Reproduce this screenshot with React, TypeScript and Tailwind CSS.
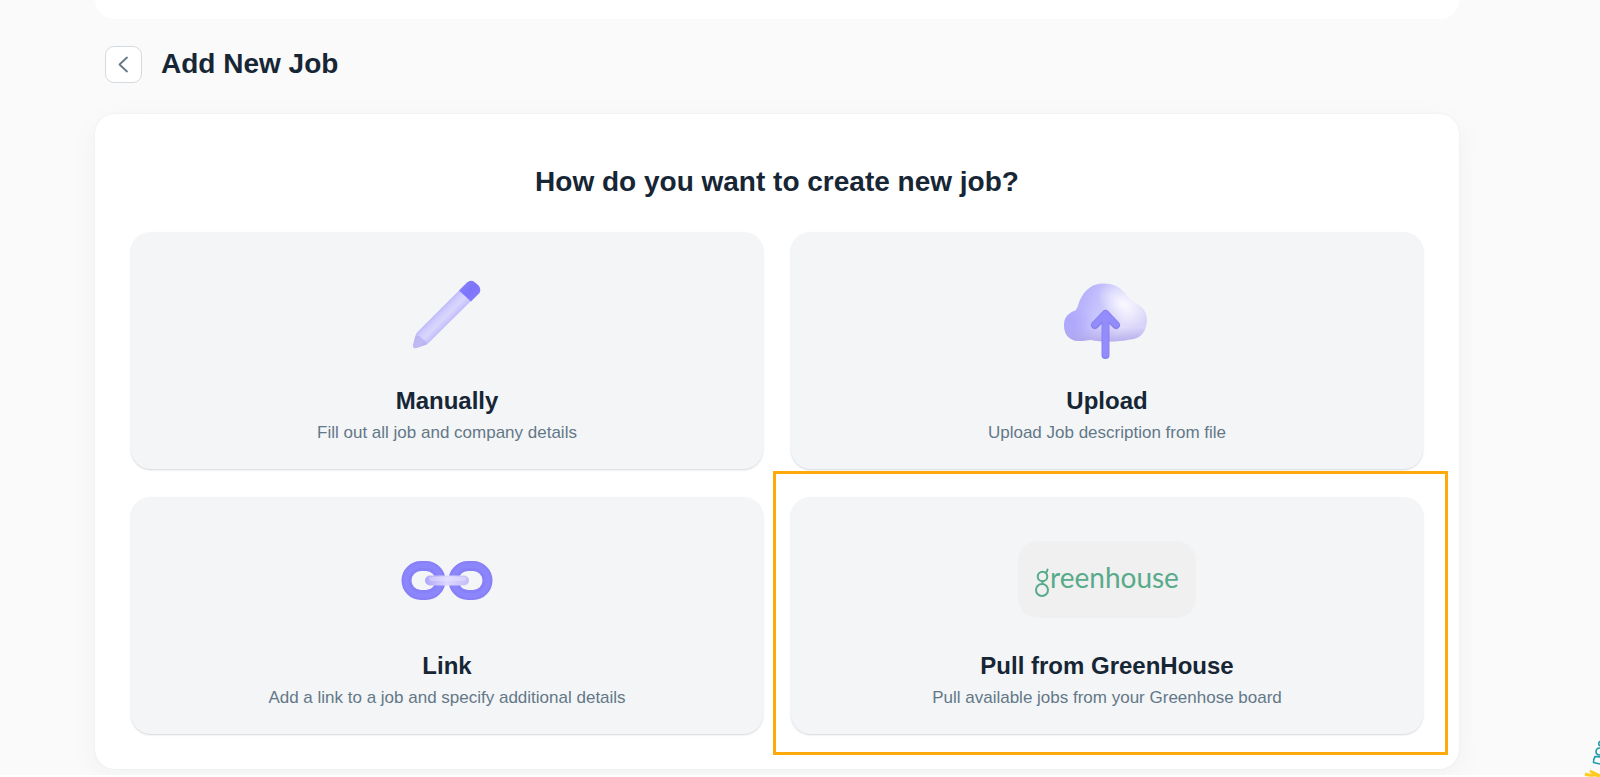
import React from "react"

interface JobOption {
  title: string;
  description: string;
  icon: React.ReactNode;
  highlighted?: boolean;
}

function PencilIcon() {
  return (
    <svg width="96" height="96" viewBox="0 0 96 96" aria-hidden="true">
      <defs>
        <linearGradient id="pencil-body" gradientUnits="userSpaceOnUse" x1="38" y1="42" x2="51" y2="55">
          <stop offset="0" stopColor="#bab2fa" />
          <stop offset="0.3" stopColor="#cfcbfd" />
          <stop offset="0.6" stopColor="#d9d6fd" />
          <stop offset="1" stopColor="#c0b8fb" />
        </linearGradient>
        <linearGradient id="pencil-cap" x1="0" y1="0" x2="1" y2="1">
          <stop offset="0" stopColor="#8a84f8" />
          <stop offset="0.5" stopColor="#7c75fb" />
          <stop offset="1" stopColor="#8a80f9" />
        </linearGradient>
      </defs>
      <path d="M60.500 22 72 33 29 75.500Q28 76.500 26.500 77L17.500 80Q13.500 81 14 77L16.500 67.500Q17 65.500 18 64.500Z" fill="url(#pencil-body)" />
      <path d="M16.500 68Q21 67 23 70.500 27 72 27.500 76.500L17.500 80Q13.500 81 14 77Z" fill="#aaa0ec" opacity="0.5" />
      <path d="M60 22.500 68 14.500Q71.500 11.500 75.500 14L79.500 17.500Q82.500 21 80.500 25L72 33.500Z" fill="url(#pencil-cap)" />
    </svg>
  )
}

function CloudUploadIcon() {
  return (
    <svg width="96" height="96" viewBox="0 0 96 96" aria-hidden="true">
      <defs>
        <linearGradient id="cloud-base" x1="0" y1="0.3" x2="1" y2="0.6">
          <stop offset="0" stopColor="#a9a2fb" />
          <stop offset="0.4" stopColor="#c7c3fd" />
          <stop offset="0.75" stopColor="#e2defb" />
          <stop offset="1" stopColor="#d8d3f8" />
        </linearGradient>
        <radialGradient id="cloud-shine" gradientUnits="userSpaceOnUse" cx="0" cy="0" r="20" gradientTransform="translate(64 36) rotate(35) scale(1.400 0.900)">
          <stop offset="0" stopColor="#fff" stopOpacity="0.85" />
          <stop offset="1" stopColor="#fff" stopOpacity="0" />
        </radialGradient>
        <radialGradient id="cloud-lobe" gradientUnits="userSpaceOnUse" cx="16" cy="58" r="20">
          <stop offset="0" stopColor="#9c95fb" stopOpacity="0.4" />
          <stop offset="1" stopColor="#9c95fb" stopOpacity="0" />
        </radialGradient>
        <linearGradient id="cloud-floor" x1="0" y1="0" x2="0" y2="1">
          <stop offset="0.75" stopColor="#a79ee6" stopOpacity="0" />
          <stop offset="1" stopColor="#a79ee6" stopOpacity="0.7" />
        </linearGradient>
        <path id="cloud-shape" d="M20 73C10 73 5 66 5 57.500 5 49 10 44.500 16.500 42.500 19 40 19 36 21 32 26 21 34 15.500 44 15.500 55 15.500 63 20 68 28 72 34 77 34.500 81 38 86 42 88 47 88 52 88 63 81 71.500 71 71.500 64 73 57 73.500 50 73.500 43 73.500 38 73.500 32 72 28 72.300 25 73 20 73Z" />
      </defs>
      <use href="#cloud-shape" fill="url(#cloud-base)" />
      <use href="#cloud-shape" fill="url(#cloud-lobe)" />
      <use href="#cloud-shape" fill="url(#cloud-shine)" />
      <use href="#cloud-shape" fill="url(#cloud-floor)" />
      <path d="M46.500 87V48M36 57 46.500 46 57 57" fill="none" stroke="#8780f0" strokeWidth="8" strokeLinecap="round" strokeLinejoin="round" />
      <path d="M46.500 86.500V48M36 56.500 46.500 46 57 56.500" fill="none" stroke="#938cfb" strokeWidth="6" strokeLinecap="round" strokeLinejoin="round" />
    </svg>
  )
}

function ChainIcon() {
  return (
    <svg width="96" height="96" viewBox="0 0 96 96" aria-hidden="true">
      <defs>
        <linearGradient id="chain-bar" x1="0" y1="0" x2="1" y2="0">
          <stop offset="0" stopColor="#b0a6fa" />
          <stop offset="0.5" stopColor="#dcd8fd" />
          <stop offset="1" stopColor="#c3bcfb" />
        </linearGradient>
      </defs>
      <g fill="none">
        <rect x="7.500" y="33" width="34" height="29" rx="14.500" stroke="#8780f7" strokeWidth="10" />
        <rect x="54.500" y="33" width="34" height="29" rx="14.500" stroke="#8780f7" strokeWidth="10" />
        <rect x="7" y="32.500" width="35" height="30" rx="15" stroke="#8c86fd" strokeWidth="5" />
        <rect x="54" y="32.500" width="35" height="30" rx="15" stroke="#8c86fd" strokeWidth="5" />
      </g>
      <rect x="26" y="42.500" width="44" height="10" rx="5" fill="url(#chain-bar)" />
      <rect x="30" y="44" width="37" height="4" rx="2" fill="#efedff" opacity="0.35" />
    </svg>
  )
}

function GreenhouseLogo() {
  return (
    <span className="mb-1 flex h-[77px] w-[178px] items-center justify-center rounded-[20px] bg-[#f0f0f0] pb-1 font-['Lato','Open_Sans',sans-serif] text-[28px] leading-8 text-[#57ab8a]">
      <svg width="15" height="38" viewBox="0 0 15 38" fill="none" stroke="#57ab8a" strokeWidth="2" className="mt-3" aria-hidden="true">
        <circle cx="7.500" cy="12.500" r="4.800" />
        <circle cx="7" cy="26" r="6" />
        <path d="M7.500 17V20M10.500 8.800Q12.500 8 12.500 5.500" strokeLinecap="round" />
      </svg>
      <span>reenhouse</span>
    </span>
  )
}

const OPTIONS: JobOption[] = [
  { title: "Manually", description: "Fill out all job and company details", icon: <PencilIcon /> },
  { title: "Upload", description: "Upload Job description from file", icon: <CloudUploadIcon /> },
  { title: "Link", description: "Add a link to a job and specify additional details", icon: <ChainIcon /> },
  {
    title: "Pull from GreenHouse",
    description: "Pull available jobs from your Greenhose board",
    icon: <GreenhouseLogo />,
    highlighted: true
  }
]

function OptionCard({ title, description, icon, highlighted }: JobOption) {
  return (
    <div className="relative">
      <button
        type="button"
        className="flex w-full flex-col items-center rounded-[20px] bg-[#f4f5f7] px-6 pt-9 pb-6 shadow-[0_1px_2px_rgba(40,55,80,0.2)]"
      >
        <span className="flex h-24 items-center justify-center">{icon}</span>
        <span className="mt-[21px] text-2xl leading-8 font-bold text-[#172635]">{title}</span>
        <span className="mt-1 text-[17px] leading-6 text-[#637887]">{description}</span>
      </button>
      {highlighted && (
        <div className="pointer-events-none absolute -top-[26px] -right-[25px] -bottom-[21px] -left-[18px] border-3 border-[#ffa90a]" />
      )}
    </div>
  )
}

export default function App() {
  return (
    <div className="relative min-h-screen overflow-hidden bg-white font-['Liberation_Sans',Arial,sans-serif] text-[#172635]">
      <div className="overflow-hidden bg-[#fafafa] pr-[141px] pb-[6px] pl-[95px]">
        {/* Bottom edge of the panel above */}
        <div className="h-[19px] rounded-b-[20px] bg-white" />

        <header className="flex items-center gap-[19px] py-[27px] pl-[10px]">
          <button
            type="button"
            aria-label="Back"
            className="flex size-[37px] items-center justify-center rounded-[9px] border border-[#d3dbe1] bg-white"
          >
            <svg width="12" height="17" viewBox="0 0 12 17" fill="none" stroke="#637887" strokeWidth="1.800" strokeLinecap="round" strokeLinejoin="round" aria-hidden="true">
              <path d="M9 1.500 1.500 8.500 9 15.500" />
            </svg>
          </button>
          <h1 className="pb-0.5 text-[28px] leading-8 font-bold">Add New Job</h1>
        </header>

        <main className="mt-1 rounded-[20px] bg-white px-9 pt-[52px] pb-[35px] shadow-[0_8px_32px_rgba(30,60,80,0.04),0_0_2px_rgba(30,60,80,0.08)]">
          <h2 className="text-center text-[28px] leading-8 font-bold">How do you want to create new job?</h2>
          <div className="mt-[34px] grid grid-cols-2 gap-7">
            {OPTIONS.map((option) => (
              <OptionCard key={option.title} {...option} />
            ))}
          </div>
        </main>
      </div>

      {/* Doodle peeking in from the corner */}
      <svg width="16" height="38" viewBox="0 0 16 38" fill="none" className="absolute right-0 bottom-0" aria-hidden="true">
        <path d="M17 2Q14 3 15 6L17 7M16 9Q12 9 12 13 12 16 17 16M17 18 11 17.500Q9.500 20 9.500 23.500L16 25" stroke="#1c9caa" strokeWidth="1.600" strokeLinejoin="round" />
        <path d="M1 35Q6 37 10 36M6 32 16 37M9 35.500 16 37" stroke="#ffcb1f" strokeWidth="3" />
      </svg>
    </div>
  )
}
